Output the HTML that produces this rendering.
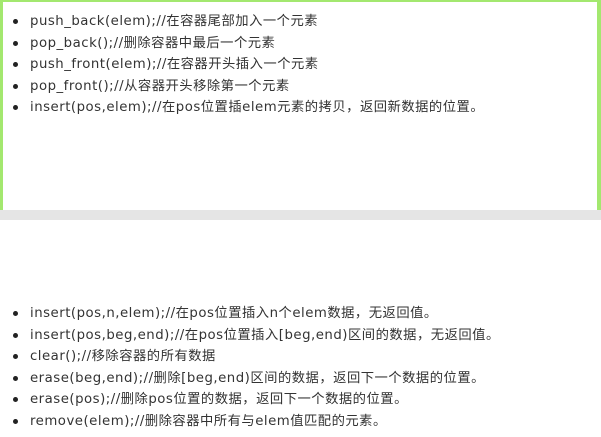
<!DOCTYPE html>
<html><head><meta charset="utf-8"><style>
html,body{margin:0;padding:0;background:#fff;width:601px;height:437px;overflow:hidden}
body{font-family:"DejaVu Sans","Noto Sans CJK SC",sans-serif;font-size:13.3px;letter-spacing:0.5px;color:#333}
.box{position:absolute;left:0;top:0;width:594px;height:208px;border-top:2px solid #a3e86f;border-left:3px solid #a3e86f;border-right:4px solid #a3e86f}
.bar{position:absolute;left:0;top:210px;width:601px;height:10px;background:#e5e5e5}
ul{position:absolute;margin:0;padding:0;list-style:none;left:0}
li{position:relative;padding-left:30px;height:21.6px;line-height:21.6px;white-space:nowrap}
li:before{content:"";position:absolute;left:13px;top:8px;width:5px;height:5px;border-radius:50%;background:#222}
</style></head><body>
<div class="box"></div>
<ul style="top:11px">
<li>push_back(elem);//在容器尾部加入一个元素</li>
<li>pop_back();//删除容器中最后一个元素</li>
<li>push_front(elem);//在容器开头插入一个元素</li>
<li>pop_front();//从容器开头移除第一个元素</li>
<li>insert(pos,elem);//在pos位置插elem元素的拷贝，返回新数据的位置。</li>
</ul>
<div class="bar"></div>
<ul style="top:303px">
<li>insert(pos,n,elem);//在pos位置插入n个elem数据，无返回值。</li>
<li>insert(pos,beg,end);//在pos位置插入[beg,end)区间的数据，无返回值。</li>
<li>clear();//移除容器的所有数据</li>
<li>erase(beg,end);//删除[beg,end)区间的数据，返回下一个数据的位置。</li>
<li>erase(pos);//删除pos位置的数据，返回下一个数据的位置。</li>
<li>remove(elem);//删除容器中所有与elem值匹配的元素。</li>
</ul>
</body></html>
